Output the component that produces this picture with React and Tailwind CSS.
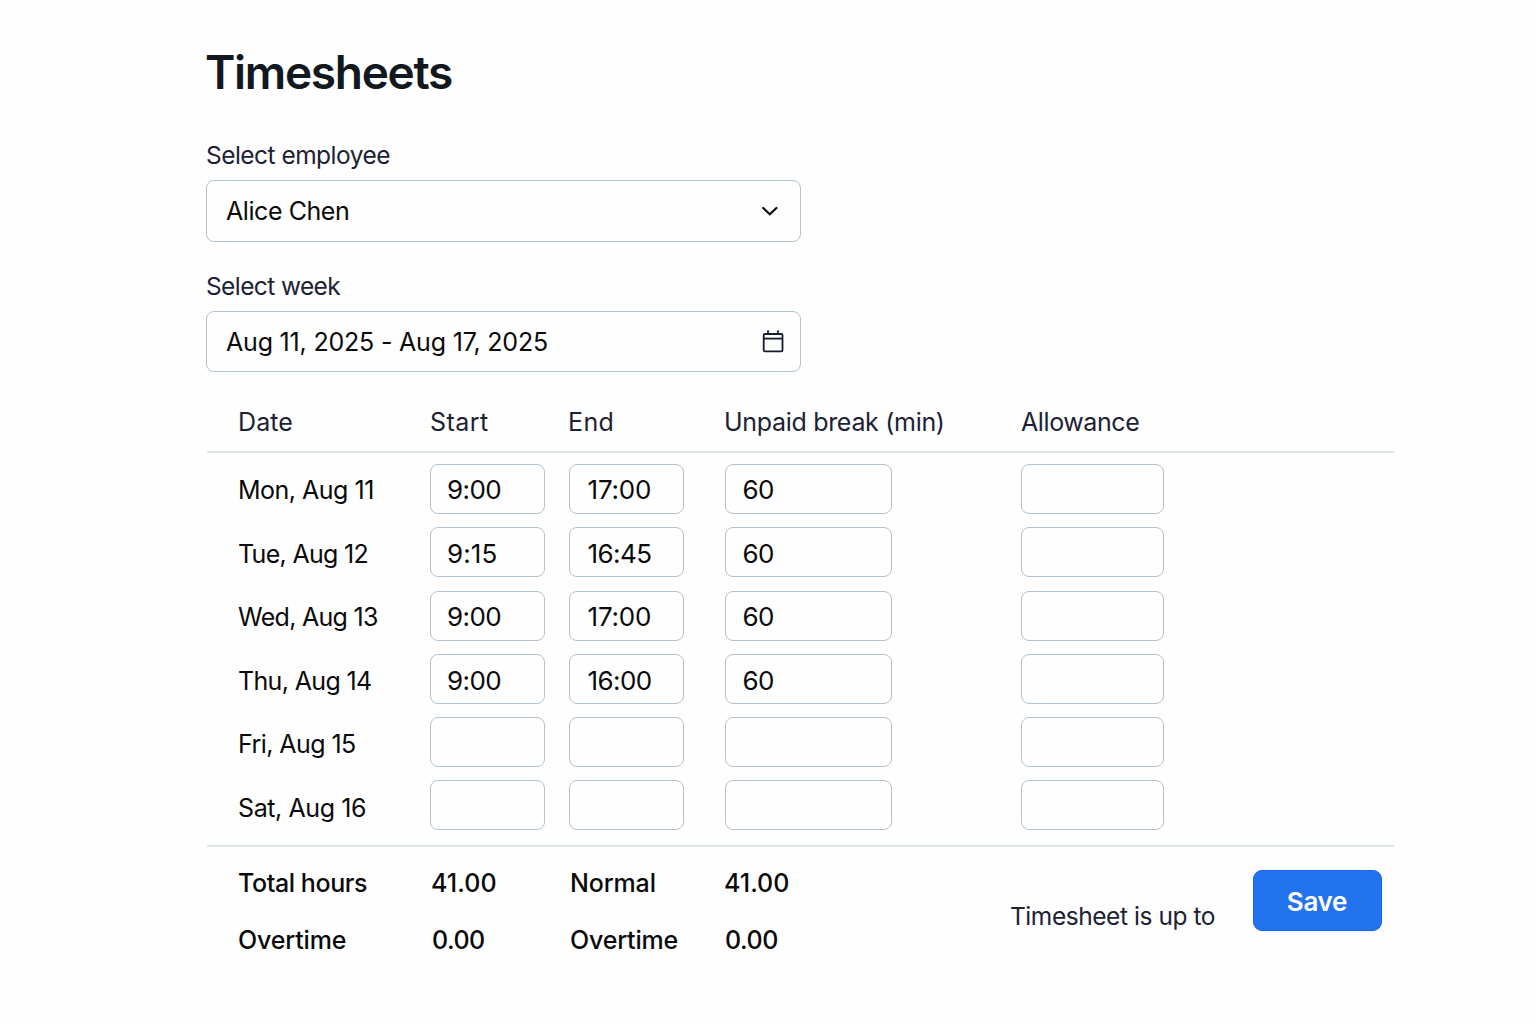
import React from "react";

const days = [
  { label: "Mon, Aug 11", cls: "mt-2.5 tracking-[-0.5px]", shift: "pt-0.5", start: "9:00", end: "17:00", pause: "60" },
  { label: "Tue, Aug 12", cls: "mt-[11px] tracking-[-0.69px]", shift: "pt-1", start: "9:15", end: "16:45", pause: "60" },
  { label: "Wed, Aug 13", cls: "mt-2.5 tracking-[-0.7px]", shift: "pt-0.5", start: "9:00", end: "17:00", pause: "60" },
  { label: "Thu, Aug 14", cls: "mt-[11px] tracking-[-0.65px]", shift: "pt-1", start: "9:00", end: "16:00", pause: "60" },
  { label: "Fri, Aug 15", cls: "mt-[11px] tracking-[-0.57px]", shift: "", start: "", end: "", pause: "" },
  { label: "Sat, Aug 16", cls: "mt-[11.5px] tracking-[-0.4px]", shift: "", start: "", end: "", pause: "" },
];

const timeTracking = {
  "9:00": "tracking-[-0.6px]",
  "9:15": "tracking-[0.1px]",
  "17:00": "tracking-[-0.2px]",
  "16:45": "tracking-[-0.55px]",
  "16:00": "tracking-[-0.6px]",
  "60": "tracking-[-0.6px]",
};

function Cell({ value, className, label }) {
  return (
    <div
      role="textbox"
      aria-label={label}
      className={`flex h-[50px] items-center rounded-lg border border-[#b4c2cd] bg-[#fefefe] text-[26px] leading-8 text-[#0a0a0b] ${className}`}
    >
      <span className={timeTracking[value] || ""}>{value}</span>
    </div>
  );
}

function ChevronIcon() {
  return (
    <svg width="18" height="12" viewBox="0 0 18 12" fill="none" stroke="#0b0d12" strokeWidth="2.2" strokeLinecap="round" strokeLinejoin="miter">
      <path d="M2.2 3 8.8 9.3l6.6-6.3" />
    </svg>
  );
}

function CalendarIcon() {
  return (
    <svg width="22" height="24" viewBox="0 0 22 24" fill="none" stroke="#141b2b" strokeWidth="1.8">
      <rect x="1.7" y="4" width="18.8" height="17.4" rx="1.2" />
      <path d="M1.9 8.6h18.4" />
      <path d="M5 1.6h2.1M14.9 1.6H17" strokeWidth="2.1" />
    </svg>
  );
}

function Total({ children, className }) {
  return <span className={`whitespace-nowrap ${className}`}>{children}</span>;
}

export default function App() {
  return (
    <div className="flex h-[1024px] w-[1536px] flex-col overflow-hidden bg-[#fefefe] pl-[206px] pt-[44px] font-['Inter',sans-serif] text-[25px] leading-8 text-[#0a0a0b]">
      <h1 className="-ml-px h-14 text-[46px] font-semibold leading-14 tracking-[-1.3px] text-[#111820]">Timesheets</h1>

      <label className="mt-[39px] h-8 text-[24.5px] tracking-[-0.53px] text-[#1c2233]">Select employee</label>
      <div className="mt-[9px] flex h-[62px] w-[595px] items-center justify-between rounded-lg border border-[#b4c2cd] bg-[#fefefe] pl-[19px] pr-[21px]">
        <span className="tracking-[-0.43px]">Alice Chen</span>
        <ChevronIcon />
      </div>

      <label className="mt-[28px] h-8 text-[24.5px] tracking-[-0.6px] text-[#1c2233]">Select week</label>
      <div className="mt-[9px] flex h-[61px] w-[595px] items-center justify-between rounded-lg border border-[#b4c2cd] bg-[#fefefe] pl-[19px] pr-4">
        <span className="tracking-[-0.195px]">Aug 11, 2025 - Aug 17, 2025</span>
        <CalendarIcon />
      </div>

      <div className="ml-px mt-[34px] grid h-[47px] w-[1187px] grid-cols-[192px_139px_156px_296px_1fr] border-b-2 border-[#dfe6ea] pl-[31px] text-[#1c2233]">
        <span className="tracking-[0.1px]">Date</span>
        <span className="tracking-[0.45px]">Start</span>
        <span className="-ml-px tracking-[0.35px]">End</span>
        <span className="-ml-px tracking-[-0.31px]">Unpaid break (min)</span>
        <span className="tracking-[-0.4px]">Allowance</span>
      </div>

      <div className="ml-px h-[394px] w-[1187px] border-b-2 border-[#dfe6ea] pt-[11px]">
        {days.map((day) => (
          <div key={day.label} className="grid h-[63.3px] grid-cols-[192px_139px_156px_296px_1fr] items-start pl-[31px]">
            <span className={`whitespace-nowrap ${day.cls}`}>{day.label}</span>
            <Cell value={day.start} label="Start" className={`w-[115px] pl-4 ${day.shift}`} />
            <Cell value={day.end} label="End" className={`w-[115px] pl-[17.5px] ${day.shift}`} />
            <Cell value={day.pause} label="Unpaid break" className={`w-[167px] pl-[16.5px] ${day.shift}`} />
            <Cell value="" label="Allowance" className="w-[143px]" />
          </div>
        ))}
      </div>

      <div className="flex w-[1188px] items-start pl-8">
        <div className="mt-5 grid grid-cols-[193px_139px_155px_286px] gap-y-[25px] font-medium">
          <Total className="tracking-[-0.4px]">Total hours</Total>
          <Total className="tracking-[0.1px]">41.00</Total>
          <Total className="tracking-[-0.15px]">Normal</Total>
          <Total className="-ml-px tracking-[0px]">41.00</Total>
          <Total className="tracking-[-0.15px]">Overtime</Total>
          <Total className="ml-px tracking-[-0.5px]">0.00</Total>
          <Total className="tracking-[-0.19px]">Overtime</Total>
          <Total className="tracking-[-0.4px]">0.00</Total>
        </div>
        <p className="-ml-px mt-[53px] w-[243px] whitespace-nowrap text-[24.5px] tracking-[-0.44px] text-[#1c2233]">Timesheet is up to</p>
        <button className="mt-[23px] flex h-[61px] w-[129px] items-center justify-center rounded-[9px] border border-[#1266f1] bg-[#2373ee] pr-px pt-0.5 text-[26px] font-semibold leading-8 tracking-[-0.3px] text-white">
          Save
        </button>
      </div>
    </div>
  );
}
